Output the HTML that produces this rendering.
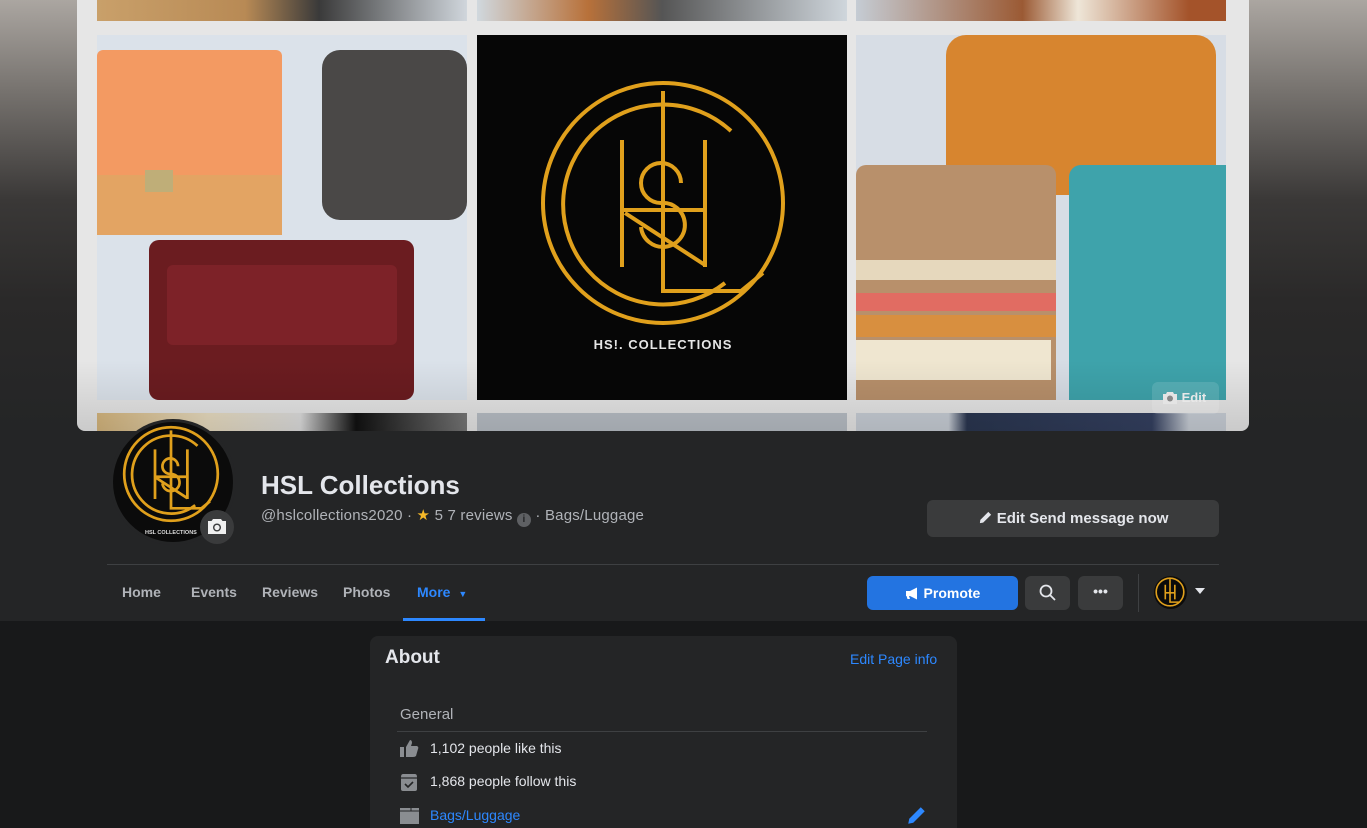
<!DOCTYPE html>
<html><head><meta charset="utf-8">
<style>
*{margin:0;padding:0;box-sizing:border-box}
html,body{width:1367px;height:828px;overflow:hidden}
body{background:#18191a;font-family:"Liberation Sans",Arial,sans-serif;position:relative}
.topbg{position:absolute;left:0;top:0;width:1367px;height:621px;background:linear-gradient(180deg,#aba6a1 0px,#77736f 90px,#3a3837 200px,#2a2929 300px,#242526 431px)}
.head{position:absolute;left:0;top:431px;width:1367px;height:190px;background:#242526}
.cover{position:absolute;left:77px;top:0;width:1172px;height:431px;background:#e6e6e6;border-radius:0 0 8px 8px;overflow:hidden}
.t{position:absolute;overflow:hidden}
.shade{position:absolute;left:0;top:360px;width:1172px;height:71px;background:linear-gradient(180deg,rgba(0,0,0,0),rgba(0,0,0,.12))}
.abs{position:absolute}
.nav{position:absolute;top:584px;font-size:14px;font-weight:bold;color:#b0b3b8}
</style></head><body>
<div class="topbg"></div>
<div class="head"></div>

<div class="cover">
  <div class="t" style="left:20px;top:0;width:370px;height:21px;background:linear-gradient(90deg,#c9a06a,#b88a55 40%,#3a3a3a 60%,#d0d6dc)"></div>
  <div class="t" style="left:400px;top:0;width:370px;height:21px;background:linear-gradient(90deg,#d0d8de,#b8713a 30%,#555 50%,#cfd6dc)"></div>
  <div class="t" style="left:779px;top:0;width:370px;height:21px;background:linear-gradient(90deg,#c5ccd4,#9b5a34 45%,#eee6d8 60%,#a4532a 90%)"></div>
  <div class="t" style="left:20px;top:35px;width:370px;height:365px;background:#dbe2ea">
    <div class="abs" style="left:0;top:15px;width:185px;height:185px;background:#f39a62;border-radius:6px"></div>
    <div class="abs" style="left:0;top:140px;width:185px;height:60px;background:#e3a463"></div>
    <div class="abs" style="left:48px;top:135px;width:28px;height:22px;background:#bfae78"></div>
    <div class="abs" style="left:225px;top:15px;width:145px;height:170px;background:#4a4847;border-radius:18px"></div>
    <div class="abs" style="left:52px;top:205px;width:265px;height:160px;background:#6b1c20;border-radius:10px"></div>
    <div class="abs" style="left:70px;top:230px;width:230px;height:80px;background:#7d2228;border-radius:6px"></div>
  </div>
  <div class="t" style="left:400px;top:35px;width:370px;height:365px;background:#060606">
    <svg width="370" height="365" style="position:absolute;left:0;top:0">
      <g transform="translate(186,168)" fill="none" stroke="#e0a01c" stroke-width="4">
        <circle r="120"/>
        <path d="M68,-72 A100,100 0 1 0 62,80"/>
        <path d="M0,-112 V88 H78 L100,70"/>
        <path d="M-41,-63 V64 M42,-63 V64 M-41,7 H42 M-38,10 L42,62"/>
        <path d="M18,-20 A20,20 0 1 0 -2,0 A22,22 0 1 1 -22,24"/>
      </g>
      <text x="186" y="314" fill="#e6e6e6" font-size="13" font-weight="bold" text-anchor="middle" font-family="Liberation Sans" letter-spacing="1">HS!. COLLECTIONS</text>
    </svg>
  </div>
  <div class="t" style="left:779px;top:35px;width:370px;height:365px;background:#d7dde5">
    <div class="abs" style="left:90px;top:0;width:270px;height:160px;background:#d7852f;border-radius:20px"></div>
    <div class="abs" style="left:0;top:130px;width:200px;height:235px;background:#b8906b;border-radius:10px 10px 0 0"></div>
    <div class="abs" style="left:0;top:225px;width:200px;height:20px;background:#e6d8bd"></div>
    <div class="abs" style="left:0;top:258px;width:200px;height:18px;background:#e16c62"></div>
    <div class="abs" style="left:0;top:280px;width:200px;height:22px;background:#d88f3f"></div>
    <div class="abs" style="left:0;top:305px;width:195px;height:40px;background:#efe6d0"></div>
    <div class="abs" style="left:213px;top:130px;width:157px;height:235px;background:#3ea3ab;border-radius:12px 0 0 0"></div>
  </div>
  <div class="t" style="left:20px;top:413px;width:370px;height:18px;background:linear-gradient(90deg,#d4b57d,#e8dcc0 30%,#ddd 55%,#111 70%,#777)"></div>
  <div class="t" style="left:400px;top:413px;width:370px;height:18px;background:#b8bec5"></div>
  <div class="t" style="left:779px;top:413px;width:370px;height:18px;background:linear-gradient(90deg,#c8ced6 25%,#2a3650 30%,#344060 80%,#c8ced6 90%)"></div>
  <div class="shade"></div>
  <div class="abs" style="left:1075px;top:382px;width:67px;height:32px;background:rgba(255,255,255,.12);border-radius:6px;color:#e8e8e8;font-size:13px;font-weight:bold;padding:8px 0 0 10px">
    <svg width="16" height="13" style="vertical-align:-2px" viewBox="0 0 16 13"><path d="M5,1 L11,1 L12,3 H15 V13 H1 V3 H4 Z" fill="#e4e4e4"/><circle cx="8" cy="7.5" r="3" fill="#888"/></svg> Edit
  </div>
</div>

<div class="abs" style="left:110px;top:419px;width:126px;height:126px;border-radius:50%;background:#242526"></div>
<div class="abs" style="left:113px;top:422px;width:120px;height:120px;border-radius:50%;background:#0b0b0b;overflow:hidden">
  <svg width="120" height="120">
    <g transform="translate(58,52) scale(0.39)" fill="none" stroke="#e0a01c" stroke-width="7">
      <circle r="120"/>
      <path d="M68,-72 A100,100 0 1 0 62,80"/>
      <path d="M0,-112 V88 H78 L100,70"/>
      <path d="M-41,-63 V64 M42,-63 V64 M-41,7 H42 M-38,10 L42,62"/>
      <path d="M18,-20 A20,20 0 1 0 -2,0 A22,22 0 1 1 -22,24"/>
    </g>
    <text x="32" y="112" fill="#ddd" font-size="5.5" font-weight="bold" font-family="Liberation Sans">HSL COLLECTIONS</text>
  </svg>
</div>
<div class="abs" style="left:200px;top:510px;width:34px;height:34px;border-radius:50%;background:#3a3b3c"></div>
<svg class="abs" style="left:207px;top:518px" width="20" height="17" viewBox="0 0 20 17"><path d="M6,1 H14 L15.5,3 H19 V16 H1 V3 H4.5 Z" fill="#f0f0f0"/><circle cx="10" cy="9.5" r="4" fill="#3a3b3c"/><circle cx="10" cy="9.5" r="2.6" fill="#f0f0f0"/></svg>

<div class="abs" style="left:261px;top:470px;font-size:26px;font-weight:bold;color:#e4e6eb">HSL Collections</div>
<div class="abs" style="left:261px;top:506px;font-size:15px;color:#b0b3b8;white-space:nowrap;letter-spacing:0.2px">@hslcollections2020 · <span style="color:#f7b928">★</span> 5 7 reviews <span style="display:inline-block;width:14px;height:14px;border-radius:50%;background:#5e6063;color:#242526;font-size:10px;text-align:center;line-height:14px;font-weight:bold;vertical-align:-2px">i</span> · Bags/Luggage</div>

<div class="abs" style="left:927px;top:500px;width:292px;height:37px;border-radius:6px;background:#3a3b3c;color:#e4e6eb;font-size:15px;font-weight:bold;text-align:center;line-height:37px">
  <svg width="15" height="15" viewBox="0 0 16 16" style="vertical-align:-2px"><path d="M2,14 L2.5,10.5 L11,2 L14,5 L5.5,13.5 Z" fill="#e4e6eb"/></svg> Edit Send message now</div>

<div class="abs" style="left:107px;top:564px;width:1112px;height:1px;background:#3e4042"></div>

<div class="nav" style="left:122px">Home</div>
<div class="nav" style="left:191px">Events</div>
<div class="nav" style="left:262px">Reviews</div>
<div class="nav" style="left:343px">Photos</div>
<div class="nav" style="left:417px;color:#2d88ff">More <span style="font-size:9px;margin-left:4px">▼</span></div>
<div class="abs" style="left:403px;top:618px;width:82px;height:3px;background:#2d88ff"></div>

<div class="abs" style="left:867px;top:576px;width:151px;height:34px;border-radius:6px;background:#2374e1;color:#fff;font-size:14px;font-weight:bold;text-align:center;line-height:34px">
  <svg width="15" height="13" viewBox="0 0 15 13" style="vertical-align:-2px"><path d="M1,4 H5 L12,0.5 V12.5 L5,9 H4 L5,12 H2.5 L1.5,9 H1 Z" fill="#fff"/></svg> Promote</div>
<div class="abs" style="left:1025px;top:576px;width:45px;height:34px;border-radius:6px;background:#3a3b3c"></div>
<svg class="abs" style="left:1039px;top:584px" width="18" height="18" viewBox="0 0 18 18"><circle cx="7" cy="7" r="5.5" fill="none" stroke="#e4e6eb" stroke-width="1.8"/><path d="M11,11 L16,16" stroke="#e4e6eb" stroke-width="1.8"/></svg>
<div class="abs" style="left:1078px;top:576px;width:45px;height:34px;border-radius:6px;background:#3a3b3c;color:#e4e6eb;text-align:center;font-weight:bold;font-size:14px;line-height:30px">•••</div>
<div class="abs" style="left:1138px;top:574px;width:1px;height:38px;background:#3e4042"></div>
<div class="abs" style="left:1154px;top:576px;width:33px;height:33px;border-radius:50%;background:#0b0b0b;overflow:hidden">
  <svg width="33" height="33"><g transform="translate(16,16) scale(0.115)" fill="none" stroke="#e0a01c" stroke-width="14"><circle r="120"/><path d="M0,-112 V88 H78 M-41,-63 V64 M42,-63 V64 M-41,7 H42"/></g></svg>
</div>
<div class="abs" style="left:1195px;top:588px;width:0;height:0;border-left:5px solid transparent;border-right:5px solid transparent;border-top:6px solid #e4e6eb"></div>

<div class="abs" style="left:370px;top:636px;width:587px;height:200px;border-radius:8px;background:#242526">
  <div class="abs" style="left:15px;top:11px;font-size:19px;font-weight:bold;color:#e4e6eb">About</div>
  <div class="abs" style="left:480px;top:15px;font-size:14px;color:#2d88ff">Edit Page info</div>
  <div class="abs" style="left:30px;top:70px;font-size:15px;color:#b0b3b8">General</div>
  <div class="abs" style="left:27px;top:95px;width:530px;height:1px;background:#3e4042"></div>
  <svg class="abs" style="left:30px;top:103px" width="19" height="19" viewBox="0 0 19 19"><rect x="0" y="8" width="4" height="10" fill="#8a8d91"/><path d="M6,8 L10,1 Q12,1 12,4 L11,7 H17 Q19,8 18,10 L16,17 Q15,18 13,18 H6 Z" fill="#8a8d91"/></svg>
  <div class="abs" style="left:60px;top:104px;font-size:14px;color:#e4e6eb">1,102 people like this</div>
  <svg class="abs" style="left:30px;top:137px" width="18" height="19" viewBox="0 0 18 19"><path d="M3,1 H15 Q17,1 17,4 V16 Q17,18 15,18 H3 Q1,18 1,16 V4 Q1,1 3,1 Z" fill="#8a8d91"/><path d="M1,5 H17" stroke="#242526" stroke-width="1.2"/><path d="M5,11 L8,14 L13,9" stroke="#242526" stroke-width="1.6" fill="none"/></svg>
  <div class="abs" style="left:60px;top:137px;font-size:14px;color:#e4e6eb">1,868 people follow this</div>
  <svg class="abs" style="left:30px;top:172px" width="19" height="16" viewBox="0 0 19 16"><rect x="0" y="0" width="19" height="16" fill="#8a8d91"/><path d="M0,3 H19 M11,0 V3" stroke="#242526" stroke-width="1"/></svg>
  <div class="abs" style="left:60px;top:171px;font-size:14px;color:#2d88ff">Bags/Luggage</div>
  <svg class="abs" style="left:537px;top:169px" width="20" height="20" viewBox="0 0 16 16"><path d="M1,15 L1.8,11 L11,1.8 L14.2,5 L5,14.2 Z" fill="#2d88ff"/></svg>
</div>
</body></html>
